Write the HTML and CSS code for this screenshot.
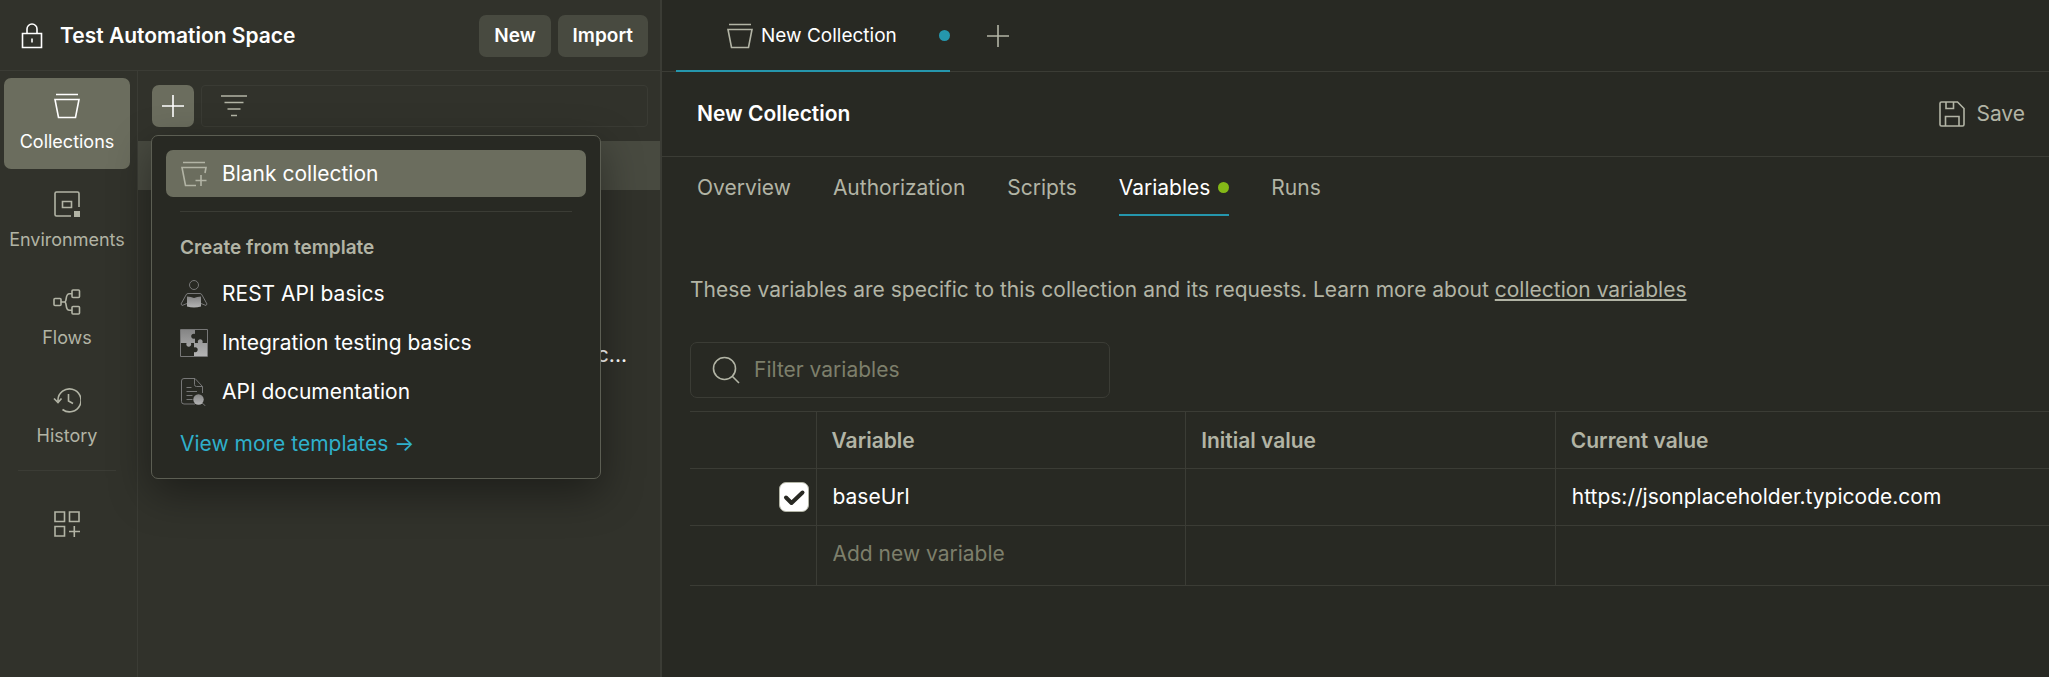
FILE: index.html
```html
<!DOCTYPE html>
<html lang="en">
<head>
    <meta charset="UTF-8">
    <meta name="viewport" content="width=device-width, initial-scale=1.0">
    <title>New Collection</title>
    <link rel="stylesheet" href="styles.css">
</head>
<body>
    <div class="app">
        <section class="workspace">
            <header class="workspace-header">
                <svg class="icon lock" viewBox="0 0 28 28"><path d="M4.500 11.500h19v14h-19zM9 11.500V7a5 5 0 0 1 10 0v4.500M14 16.500v4"/></svg>
                <h1>Test Automation Space</h1>
                <button type="button" class="button">New</button>
                <button type="button" class="button">Import</button>
            </header>

            <div class="workspace-body">
                <nav class="rail">
                    <a href="#" class="rail-item active">
                        <svg class="icon" viewBox="0 0 28 28"><path d="M3 2.500h22M2 7.500h24l-3.500 18h-17z"/></svg>
                        Collections
                    </a>
                    <a href="#" class="rail-item">
                        <svg class="icon" viewBox="0 0 28 28"><path d="M26 17V3.500a1.500 1.500 0 0 0-1.500-1.500h-21A1.500 1.500 0 0 0 2 3.500v21A1.500 1.500 0 0 0 3.500 26H18M9.500 11.500h9v6h-9z"/><path class="solid" d="M21 21h6v6h-6z"/></svg>
                        Environments
                    </a>
                    <a href="#" class="rail-item">
                        <svg class="icon" viewBox="0 0 28 28"><rect x="1" y="10.500" width="7" height="7" rx="1"/><rect x="19" y="2" width="7.500" height="7.500" rx="1"/><rect x="19" y="18.500" width="7.500" height="7.500" rx="1"/><path d="M8 14h3.500M19 5.700h-2.500c-5 0-2 8.300-5 8.300 3 0 0 8.300 5 8.300H19"/></svg>
                        Flows
                    </a>
                    <a href="#" class="rail-item">
                        <svg class="icon" viewBox="0 0 28 28"><path d="M5 15V14a11.500 11.500 0 1 1 4.500 9.500M1 12.500l4 4 3.500-4M15.500 8v7l4.500 2.500"/></svg>
                        History
                    </a>
                    <hr>
                    <button type="button" class="rail-more" aria-label="Configure sidebar">
                        <svg class="icon" viewBox="0 0 28 28"><path d="M2 2h9.500v9.500H2zM16.500 2H26v9.500h-9.500zM2 16.500h9.500V26H2zM21.300 16v11M16 21.500h11"/></svg>
                    </button>
                </nav>

                <div class="explorer">
                    <div class="explorer-tools">
                        <div class="create">
                            <button type="button" class="create-button" aria-label="Create new">
                                <svg class="icon" viewBox="0 0 28 28"><path d="M14 3v22M3 14h22"/></svg>
                            </button>
                            <div class="menu">
                                <button type="button" class="menu-item selected">
                                    <svg class="icon" viewBox="0 0 28 28"><path d="M3 2.500h22M25 13l1-5.500H2l3.500 18H16M21 15v11M15.500 20.500h11"/></svg>
                                    Blank collection
                                </button>
                                <hr>
                                <h2>Create from template</h2>
                                <button type="button" class="menu-item">
                                    <svg class="icon art" viewBox="0 0 28 28">
                                        <defs>
                                            <linearGradient id="shade" x1="0" y1="0" x2="0" y2="1">
                                                <stop offset="0" stop-color="#858585"/>
                                                <stop offset="1" stop-color="#b4b4b4"/>
                                            </linearGradient>
                                        </defs>
                                        <circle cx="14" cy="5" r="4.500"/>
                                        <path d="M7 23.500l-5 2-1-1.500 5-9q.5-1.500 2-1.500h12q1.500 0 2 1.500l5 9-1 1.500-5-2"/>
                                        <path class="fill" d="M7 16.500q4 0 7 1.500 3-1.500 7-1.500v10q-7 2-14 0z"/>
                                    </svg>
                                    REST API basics
                                </button>
                                <button type="button" class="menu-item">
                                    <svg class="icon art" viewBox="0 0 28 28">
                                        <path d="M.5.500h27v27H.500z"/>
                                        <path class="fill" d="M1 1h14v4c-5-1.500-5 6 0 4.500V14h-4c1.500 5-6 5-4.500 0H1zM27 27H14v-4c5 1.500 5-6 0-4.500V14h4c-1.500-5 6-5 4.500 0H27z"/>
                                    </svg>
                                    Integration testing basics
                                </button>
                                <button type="button" class="menu-item">
                                    <svg class="icon art" viewBox="0 0 28 28">
                                        <path d="M22.500 15V8.500L15 .500H4Q1.500.500 1.500 3v20.500Q1.500 26 4 26H15M14.500 1v5.500q0 2 2 2h6M6.500 9.500h5M6.500 13.500h10.500M6.500 17.500h6M6.500 21.500h6M21 24l4.500 4"/>
                                        <circle class="fill" cx="18.500" cy="21.500" r="5.200"/>
                                    </svg>
                                    API documentation
                                </button>
                                <a href="#" class="menu-link">View more templates →</a>
                            </div>
                        </div>
                        <label class="filter">
                            <svg class="icon" viewBox="0 0 28 28"><path d="M1 4h26M4.500 10.500h19M7.500 17h13M11 23.500h6"/></svg>
                            <input type="text" aria-label="Filter collections">
                        </label>
                    </div>
                    <div class="tree-row"></div>
                    <p class="tree-note">c...</p>
                </div>
            </div>
        </section>

        <main class="editor">
            <div class="tab-bar">
                <div class="tab">
                    <svg class="icon" viewBox="0 0 28 28"><path d="M3 2.500h22M2 7.500h24l-3.500 18h-17z"/></svg>
                    <span>New Collection</span>
                    <i class="dot unsaved"></i>
                </div>
                <button type="button" class="tab-add" aria-label="New tab">
                    <svg class="icon" viewBox="0 0 28 28"><path d="M14 3v22M3 14h22"/></svg>
                </button>
            </div>

            <div class="editor-header">
                <h2>New Collection</h2>
                <button type="button" class="save">
                    <svg class="icon" viewBox="0 0 28 28"><path d="M3.500 2h16l6.500 6.500v16a1.500 1.500 0 0 1-1.500 1.500h-21A1.500 1.500 0 0 1 2 24.500v-21A1.500 1.500 0 0 1 3.500 2M8 2v6.500h7.500V2M7.500 26V16.500h13.500V26"/></svg>
                    Save
                </button>
            </div>

            <nav class="sections">
                <a href="#">Overview</a>
                <a href="#">Authorization</a>
                <a href="#">Scripts</a>
                <a href="#" class="current">Variables<i class="dot changed"></i></a>
                <a href="#">Runs</a>
            </nav>

            <div class="variables">
                <p>These variables are specific to this collection and its requests. Learn more about <a href="#">collection variables</a></p>

                <label class="search">
                    <svg class="icon" viewBox="0 0 28 28"><path d="M20 20l7 7"/><circle cx="12.500" cy="12.500" r="11"/></svg>
                    <input type="text" placeholder="Filter variables" aria-label="Filter variables">
                </label>

                <table>
                    <thead>
                        <tr>
                            <th class="check-cell"></th>
                            <th>Variable</th>
                            <th>Initial value</th>
                            <th class="last">Current value</th>
                        </tr>
                    </thead>
                    <tbody>
                        <tr>
                            <td class="check-cell"><input type="checkbox" aria-label="Enable baseUrl" checked></td>
                            <td><input type="text" value="baseUrl" aria-label="Variable"></td>
                            <td><input type="text" aria-label="Initial value"></td>
                            <td><input type="text" value="https://jsonplaceholder.typicode.com" aria-label="Current value"></td>
                        </tr>
                        <tr class="new-row">
                            <td class="check-cell"></td>
                            <td><input type="text" placeholder="Add new variable" aria-label="New variable"></td>
                            <td></td>
                            <td></td>
                        </tr>
                    </tbody>
                </table>
            </div>
        </main>
    </div>
</body>
</html>
```
FILE: styles.css
```css
* {
    box-sizing: border-box;
}

body {
    margin: 0;
    font-family: Inter, sans-serif;
    font-size: 21px;
    line-height: 28px;
    color: #fff;
    background-color: #282923;
}

h1, h2, p {
    margin: 0;
    font-size: 21px;
    font-weight: 600;
}

p {
    font-weight: 400;
}

a {
    color: inherit;
    text-decoration: none;
}

button, input {
    font: inherit;
    color: inherit;
    border: none;
    background: none;
    padding: 0;
    margin: 0;
}

button {
    cursor: pointer;
}

input {
    outline: none;
    min-width: 0;
    width: 100%;
}

input::placeholder {
    color: #7d7f6b;
    opacity: 1;
}

hr {
    border: none;
    border-top: 1px solid #3b3c35;
    margin: 0;
}

.icon {
    width: 28px;
    height: 28px;
    flex: none;
    display: block;
    fill: none;
    stroke: currentColor;
    stroke-width: 1.6;
}

.icon .solid {
    fill: currentColor;
    stroke: none;
}

.app {
    display: flex;
    min-height: 100vh;
}

/* left side */
.workspace {
    width: 662px;
    flex: none;
    display: flex;
    flex-direction: column;
    background-color: #31322b;
    border-right: 2px solid #3b3c35;
}

.workspace-header {
    display: flex;
    align-items: center;
    gap: 7px;
    height: 71px;
    padding: 1px 12px 0 18px;
    border-bottom: 1px solid #3b3c35;
}

.workspace-header h1 {
    flex: 1;
    margin-left: 7px;
}

.button {
    height: 42px;
    padding: 0 15px;
    font-size: 19px;
    font-weight: 600;
    border-radius: 7px;
    background-color: #484a40;
}

.workspace-body {
    flex: 1;
    display: flex;
}

.rail {
    width: 138px;
    flex: none;
    display: flex;
    flex-direction: column;
    gap: 7px;
    padding: 7px 7px 0 4px;
    border-right: 1px solid #3b3c35;
    font-size: 18px;
    color: #b2b4a5;
}

.rail-item {
    display: flex;
    flex-direction: column;
    align-items: center;
    gap: 8px;
    height: 91px;
    padding-top: 14px;
    border-radius: 7px;
}

.rail-item.active {
    color: #fff;
    background-color: #6b6d5e;
}

.rail hr {
    margin: 0 14px;
}

.rail-more {
    align-self: center;
    margin-top: 32px;
}

.explorer {
    flex: 1;
    min-width: 0;
}

.explorer-tools {
    display: flex;
    gap: 7px;
    padding: 14px 12px 14px 14px;
}

.create {
    position: relative;
}

.create-button {
    display: grid;
    place-items: center;
    width: 42px;
    height: 42px;
    border-radius: 7px;
    background-color: #6b6d5e;
}

.filter {
    flex: 1;
    display: flex;
    align-items: center;
    gap: 14px;
    height: 42px;
    padding: 0 18px;
    border: 1px solid #3a3b34;
    border-radius: 4px;
    color: #b2b4a5;
}

.tree-row {
    height: 49px;
    background-color: #484a40;
}

.tree-note {
    padding: 151px 33px 0 0;
    text-align: right;
}

/* create menu */
.menu {
    position: absolute;
    top: 50px;
    left: -1px;
    z-index: 1;
    width: 450px;
    padding: 14px 14px 20px;
    border: 1px solid #5c5e53;
    border-radius: 7px;
    background-color: #282923;
    box-shadow: 0 14px 42px rgba(0, 0, 0, 0.4);
}

.menu-item {
    display: flex;
    align-items: center;
    gap: 14px;
    width: 100%;
    height: 49px;
    padding: 0 14px;
    border-radius: 7px;
    text-align: left;
}

.menu-item.selected {
    height: 47px;
    background-color: #6b6d5e;
}

.menu-item.selected .icon {
    color: #b2b4a5;
}

.menu hr {
    margin: 14px 14px 22px;
}

.menu h2 {
    padding: 0 14px;
    margin-bottom: 7px;
    font-size: 19px;
    color: #b2b4a5;
}

.art {
    stroke: #777;
    stroke-width: 1;
}

.art .fill {
    fill: url(#shade);
    stroke: none;
}

.menu-link {
    display: block;
    padding: 14px 14px 0;
    color: #2fb0cb;
}

/* right side */
.editor {
    flex: 1;
    min-width: 0;
}

.tab-bar {
    display: flex;
    height: 72px;
    padding-left: 14px;
    border-bottom: 1px solid #3b3c35;
}

.tab {
    display: flex;
    align-items: center;
    gap: 7px;
    width: 274px;
    height: 72px;
    padding: 1px 0 0 50px;
    border-bottom: 2px solid #2596ad;
    font-size: 19px;
}

.tab .icon {
    color: #b2b4a5;
}

.dot {
    width: 11px;
    height: 11px;
    border-radius: 50%;
}

.unsaved {
    margin-left: auto;
    background-color: #2596ad;
}

.changed {
    background-color: #84b817;
}

.tab-add {
    margin-left: 34px;
    color: #b2b4a5;
}

.editor-header {
    display: flex;
    align-items: center;
    justify-content: space-between;
    height: 85px;
    padding: 0 24px 0 35px;
    border-bottom: 1px solid #3b3c35;
}

.save {
    display: flex;
    align-items: center;
    gap: 10px;
    color: #b2b4a5;
}

.sections {
    display: flex;
    gap: 42px;
    padding-left: 35px;
    color: #b2b4a5;
}

.sections a {
    display: flex;
    align-items: center;
    gap: 8px;
    height: 59px;
    padding-top: 4px;
    border-bottom: 2px solid transparent;
}

.sections .current {
    color: #fff;
    border-bottom-color: #2596ad;
}

.variables {
    padding: 60px 0 0 28px;
}

.variables p {
    color: #b2b4a5;
}

.variables p a {
    text-decoration: underline 2px;
    text-underline-offset: 2px;
}

.search {
    display: flex;
    align-items: center;
    gap: 14px;
    width: 420px;
    height: 56px;
    margin: 38px 0 13px;
    padding: 0 21px;
    border: 1px solid #3b3c35;
    border-radius: 7px;
    color: #b2b4a5;
}

table {
    width: 100%;
    table-layout: fixed;
    border-collapse: collapse;
}

th, td {
    height: 57px;
    padding: 0 16px;
    border: 1px solid #3b3c35;
    border-width: 1px 0 1px 1px;
    text-align: left;
}

th {
    width: 27.2%;
    padding: 2px 15px 0;
    font-weight: 600;
    color: #b2b4a5;
}

th.last {
    width: auto;
}

.check-cell {
    width: 126px;
    padding-right: 7px;
    border-left: none;
}

.new-row td {
    height: 60px;
    padding-bottom: 4px;
}

input[type="checkbox"] {
    appearance: none;
    display: block;
    width: 30px;
    height: 30px;
    margin-left: auto;
    border: 1px solid #b2b4a5;
    border-radius: 7px;
}

input[type="checkbox"]:checked {
    background: #fff url('data:image/svg+xml,<svg xmlns="http://www.w3.org/2000/svg" viewBox="0 0 28 28"><path d="M6 14.500l5.500 5.500L22.500 9.500" fill="none" stroke="%23282923" stroke-width="4" stroke-linecap="round" stroke-linejoin="round"/></svg>');
}
```
